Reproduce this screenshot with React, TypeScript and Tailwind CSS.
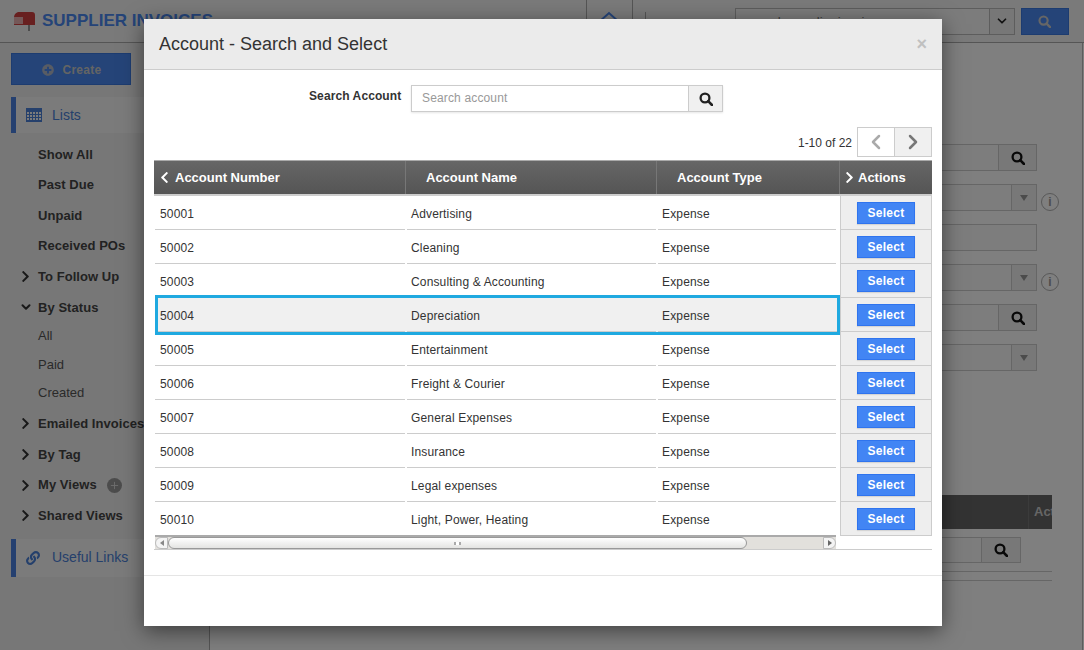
import { ChevronDown, ChevronLeft, ChevronRight, Plus } from 'lucide-react'
import { FaChevronLeft, FaChevronRight, FaLink, FaPlusCircle } from 'react-icons/fa'

const ACCOUNTS = [
  ['50001', 'Advertising'],
  ['50002', 'Cleaning'],
  ['50003', 'Consulting & Accounting'],
  ['50004', 'Depreciation'],
  ['50005', 'Entertainment'],
  ['50006', 'Freight & Courier'],
  ['50007', 'General Expenses'],
  ['50008', 'Insurance'],
  ['50009', 'Legal expenses'],
  ['50010', 'Light, Power, Heating'],
]

function SearchIcon({ className }: { className?: string }) {
  return (
    <svg className={className} viewBox="0 0 14 14" fill="none" stroke="currentColor">
      <circle cx="6" cy="6" r="4.4" strokeWidth="2.3" />
      <path d="M9.2 9.2 13 13" strokeWidth="2.6" strokeLinecap="round" />
    </svg>
  )
}

function NavItem({ label, arrow, down, extra }: { label: string; arrow?: boolean; down?: boolean; extra?: boolean }) {
  return (
    <div className="flex h-[30.6px] items-center pl-[21px] text-[13px] font-bold tracking-[0.05px] text-[#444]">
      <span className="flex w-[17px] shrink-0 items-center">
        {arrow && <FaChevronRight className="h-[13px] w-[9px] text-[#333]" />}
        {down && <ChevronDown className="h-[14px] w-[14px] -ml-[2px] text-[#333]" strokeWidth={3.5} />}
      </span>
      <span className="whitespace-nowrap">{label}</span>
      {extra && (
        <span className="ml-[10px] flex h-[15px] w-[15px] items-center justify-center rounded-full bg-[#999]">
          <Plus className="h-[11px] w-[11px] text-[#ddd]" strokeWidth={2} />
        </span>
      )}
    </div>
  )
}

function Sidebar() {
  return (
    <aside className="flex w-[210px] shrink-0 flex-col border-r border-[#aaa] bg-[#efefef] pt-[10px]">
      <button className="mx-[11px] flex h-[32px] w-[120px] items-center justify-center gap-[8px] border border-[#3a78e0] bg-[#4a88f0] pl-[2px] pt-[1px] text-[12px] font-bold tracking-[0.3px] text-[#c8c8c8]">
        <FaPlusCircle className="h-[12px] w-[12px] text-[#b0b8c8]" />
        Create
      </button>
      <div className="ml-[11px] mt-[12px] flex h-[36px] items-center border-l-[5px] border-[#4a80e0] bg-[#f7f7f7] pl-[10px] text-[14px] text-[#4a80d8]">
        <svg className="mr-[10px] h-[14px] w-[16px]" viewBox="0 0 16 14" fill="#4a80d8">
          <path d="M0 0h16v14H0z" />
          <path d="M1 4h2v2H1zM4 4h2v2H4zM7 4h2v2H7zM10 4h2v2h-2zM13 4h2v2h-2zM1 7h2v2H1zM4 7h2v2H4zM7 7h2v2H7zM10 7h2v2h-2zM13 7h2v2h-2zM1 10h2v2H1zM4 10h2v2H4zM7 10h2v2H7zM10 10h2v2h-2zM13 10h2v2h-2z" fill="#f7f7f7" />
        </svg>
        Lists
      </div>
      <div className="mt-[6px]">
        <NavItem label="Show All" />
        <NavItem label="Past Due" />
        <NavItem label="Unpaid" />
        <NavItem label="Received POs" />
        <NavItem label="To Follow Up" arrow />
        <NavItem label="By Status" down />
        <div className="-mt-[1px] mb-[1.5px]">
          <div className="flex h-[28.5px] items-center pl-[38px] text-[13px] text-[#555]">All</div>
          <div className="flex h-[28.5px] items-center pl-[38px] text-[13px] text-[#555]">Paid</div>
          <div className="flex h-[28.5px] items-center pl-[38px] text-[13px] text-[#555]">Created</div>
        </div>
        <NavItem label="Emailed Invoices" arrow />
        <NavItem label="By Tag" arrow />
        <NavItem label="My Views" arrow extra />
        <NavItem label="Shared Views" arrow />
      </div>
      <div className="ml-[11px] mt-[8px] flex h-[38px] items-center border-l-[5px] border-[#4a80e0] bg-[#f7f7f7] pl-[10px] text-[14px] text-[#4a80d8]">
        <FaLink className="mr-[12px] h-[14px] w-[14px]" />
        Useful Links
      </div>
    </aside>
  )
}

function Header() {
  return (
    <header className="flex h-[43px] items-center border-b border-[#aaa] bg-[#f5f5f5]">
      <svg className="ml-[13px] h-[20px] w-[23px]" viewBox="0 0 23 20">
        <path d="M5 1h14a3 3 0 0 1 3 3v10H1V7a6 6 0 0 1 4-6z" fill="#d04040" />
        <path d="M1 6h9v7H1z" fill="#e8b0b0" />
        <path d="M15 14h2v6h-2z" fill="#999" />
      </svg>
      <span className="ml-[6px] text-[17px] font-bold text-[#4a88f0]">SUPPLIER INVOICES</span>
      <div className="ml-[373px] flex h-full w-[47px] items-center justify-center border-x border-[#aaa]">
        <svg className="h-[20px] w-[22px]" viewBox="0 0 22 20" fill="none" stroke="#4a88f0" strokeWidth="2">
          <path d="M1 11 11 2l10 9M4 9v10h14V9" />
        </svg>
      </div>
      <div className="ml-[12px] flex h-[18px] w-[16px] items-end gap-[3px] border-l border-[#aaa] pl-[3px]">
        <span className="h-[10px] w-[3px] bg-[#aaa]" />
        <span className="h-[6px] w-[3px] bg-[#aaa]" />
      </div>
      <div className="ml-[74px] flex h-[27px] w-[280px] border border-[#bbb] bg-[#f8f8f8]">
        <span className="flex-1 pl-[10px] text-[13px] leading-[25px] text-[#777]">search supplier invoices</span>
        <span className="flex w-[25px] items-center justify-center border-l border-[#bbb] bg-[#eee]">
          <ChevronDown className="h-[14px] w-[14px] text-[#222]" strokeWidth={3} />
        </span>
      </div>
      <button className="ml-[6px] flex h-[27px] w-[48px] items-center justify-center border border-[#3a78e0] bg-[#4a88f0]">
        <SearchIcon className="h-[13px] w-[13px] text-[#ccc]" />
      </button>
    </header>
  )
}

function FormRow({ kind, info }: { kind: 'search' | 'select' | 'plain'; info?: boolean }) {
  return (
    <div className="flex">
      <div className="flex h-[27px] w-[337px] border border-[#ccc] bg-[#fafafa]">
        <span className="flex-1" />
        {kind === 'search' && (
          <span className="flex w-[38px] items-center justify-center border-l border-[#ccc] bg-[#f0f0f0]">
            <SearchIcon className="h-[14px] w-[14px] text-[#111]" />
          </span>
        )}
        {kind === 'select' && (
          <span className="flex w-[25px] items-center justify-center border-l border-[#ccc] bg-[#f0f0f0]">
            <span className="h-0 w-0 border-x-[4px] border-t-[6px] border-x-transparent border-t-[#999]" />
          </span>
        )}
      </div>
      {info && (
        <span className="ml-[4px] mt-[9px] flex h-[18px] w-[18px] items-center justify-center rounded-full border border-[#b0b0b0] text-[12px] font-bold text-[#999]">
          i
        </span>
      )}
    </div>
  )
}

function Content() {
  return (
    <main className="mr-px flex-1 border-r border-[#bbb] bg-white pl-[490px]">
      <div className="flex h-[371px] flex-col gap-[13px] pt-[101px]">
        <FormRow kind="search" />
        <FormRow kind="select" info />
        <FormRow kind="plain" />
        <FormRow kind="select" info />
        <FormRow kind="search" />
        <FormRow kind="select" />
      </div>
      <div className="-mt-[37px] pt-[118px]">
        <div className="flex h-[34px] w-[352px] justify-end bg-[#666]">
          <span className="w-[24px] overflow-hidden whitespace-nowrap border-l border-[#777] pl-[5px] text-[13px] font-bold leading-[34px] text-[#ccc]">Actions</span>
        </div>
      </div>
      <div className="mt-[8px] flex h-[26px] w-[321px] justify-end border border-[#ccc] bg-[#fafafa]">
        <span className="flex w-[39px] items-center justify-center border-l border-[#ccc] bg-[#f0f0f0]">
          <SearchIcon className="h-[14px] w-[14px] text-[#111]" />
        </span>
      </div>
      <div className="mt-[8px] h-[10px] w-[352px] border-y border-[#ccc]" />
    </main>
  )
}

function ScrollBar() {
  return (
    <div className="ml-px flex h-[14px] w-[681px] items-center border-t-2 border-[#aaa] bg-[#e2e0dc]">
      <span className="flex h-[12px] w-[13px] items-center justify-center rounded-l-full border border-[#bbb] bg-[#f4f4f4]">
        <span className="h-0 w-0 border-y-[3px] border-r-[4px] border-y-transparent border-r-[#888]" />
      </span>
      <span className="flex h-[12px] w-[579px] items-center justify-center rounded-full border border-[#999] bg-gradient-to-b from-white to-[#e4e4e2]">
        <span className="h-[3px] w-[7px] border-x-2 border-[#aaa] bg-[#fff]" />
      </span>
      <span className="flex-1" />
      <span className="flex h-[12px] w-[13px] items-center justify-center rounded-r-full border border-[#bbb] bg-[#f4f4f4]">
        <span className="h-0 w-0 border-y-[3px] border-l-[4px] border-y-transparent border-l-[#666]" />
      </span>
    </div>
  )
}

function AccountRow({ num, name, last }: { num: string; name: string; last: boolean }) {
  const active = num === '50004'
  const line = last ? '' : 'border-b border-[#ccc]'
  return (
    <div
      className={`flex h-[34px] gap-[2px] text-[12px] tracking-[0.15px] text-[#333] ${
        active ? 'ml-[4px] w-[679px] bg-[#f0f0f0] outline-[3px] outline-[#1fa9e0]' : 'ml-px w-[681px]'
      }`}
    >
      <span className={`flex items-center pt-[2px] ${line} ${active ? 'w-[247px] pl-[2px]' : 'w-[250px] pl-[5px]'}`}>{num}</span>
      <span className={`flex w-[249px] items-center pl-[4px] pt-[2px] ${line}`}>{name}</span>
      <span className={`flex flex-1 items-center pl-[4px] pt-[2px] ${line}`}>Expense</span>
    </div>
  )
}

function AccountModal() {
  return (
    <div className="absolute left-[144px] top-[19px] flex h-[607px] w-[798px] flex-col bg-white shadow-[0_5px_20px_rgba(0,0,0,0.5)]">
      <div className="flex h-[51px] shrink-0 items-center justify-between border-b border-[#ccc] bg-[#ebebeb] pl-[15px] pr-[15px]">
        <h3 className="text-[18px] text-[#333]">Account - Search and Select</h3>
        <span className="text-[18px] font-bold text-[#c0c0c0]">×</span>
      </div>

      <div className="mt-[15px] flex h-[27px] shrink-0">
        <label className="ml-[165px] mt-[2px] w-[92px] whitespace-nowrap text-[12px] font-bold leading-[18px] tracking-[0.1px] text-[#333]">Search Account</label>
        <div className="ml-[10px] flex h-[27px] w-[312px] border border-[#ccc] shadow-[0_1px_2px_rgba(0,0,0,0.1)]">
          <span className="flex-1 pl-[10px] text-[12px] leading-[25px] tracking-[0.15px] text-[#999]">Search account</span>
          <span className="flex w-[34px] items-center justify-center border-l border-[#ccc] bg-[#f0f0f0]">
            <SearchIcon className="h-[14px] w-[14px] text-[#222]" />
          </span>
        </div>
      </div>

      <div className="mt-[15px] flex h-[30px] shrink-0 items-center justify-end pr-[10px]">
        <span className="mr-[5px] pt-[2px] text-[12px] text-[#333]">1-10 of 22</span>
        <span className="flex h-[30px] w-[38px] items-center justify-center border border-[#ccc] bg-white">
          <ChevronLeft className="h-[24px] w-[24px] text-[#aaa]" strokeWidth={2.5} />
        </span>
        <span className="-ml-px flex h-[30px] w-[38px] items-center justify-center border border-[#ccc] bg-[#f0f0f0]">
          <ChevronRight className="h-[24px] w-[24px] text-[#777]" strokeWidth={2.5} />
        </span>
      </div>

      <div className="ml-[10px] mt-[3px] w-[778px] shrink-0">
        <div className="flex h-[36px] items-center border-t border-b-2 border-t-[#aaa] border-b-[#ccc] bg-gradient-to-b from-[#666] to-[#555] text-[13px] font-bold text-white">
          <div className="flex h-full w-[252px] items-center border-r border-[#777] pl-[6px]">
            <FaChevronLeft className="mr-[6px] h-[13px] w-[9px]" />
            Account Number
          </div>
          <div className="flex h-full w-[251px] items-center border-r border-[#777] pl-[20px]">Account Name</div>
          <div className="flex h-full w-[183px] items-center border-r border-[#777] pl-[20px]">Account Type</div>
          <div className="flex h-full flex-1 items-center pl-[5px]">
            <FaChevronRight className="mr-[4px] h-[13px] w-[9px]" />
            Actions
          </div>
        </div>

        <div className="flex">
          <div className="w-[685px] shrink-0">
            {ACCOUNTS.map(([num, name], i) => (
              <AccountRow key={num} num={num} name={name} last={i === ACCOUNTS.length - 1} />
            ))}
          </div>
          <div className="ml-px w-[92px] border border-t-0 border-[#ccc] bg-[#eee]">
            {ACCOUNTS.map(([num]) => (
              <div key={num} className="flex h-[34px] items-center justify-center border-b border-[#ccc] last:h-[33px] last:border-b-0">
                <button className="h-[22px] w-[58px] border border-[#2f74ee] bg-[#4285f4] text-[12px] font-bold tracking-[0.3px] text-white shadow-[0_1px_1px_rgba(0,0,0,0.1)]">
                  Select
                </button>
              </div>
            ))}
          </div>
        </div>
      </div>

      <div className="ml-[10px] -mt-[1px] w-[778px] shrink-0 border-b border-[#ccc]">
        <ScrollBar />
      </div>
      <div className="mt-[25px] h-px shrink-0 bg-[#e5e5e5]" />
    </div>
  )
}

export default function App() {
  return (
    <div className="relative h-[650px] w-[1084px] overflow-hidden bg-white font-['Liberation_Sans',Arial,sans-serif]">
      <div className="flex h-full flex-col">
        <Header />
        <div className="flex flex-1 overflow-hidden">
          <Sidebar />
          <Content />
        </div>
      </div>
      <div className="absolute inset-0 bg-black/50" />
      <AccountModal />
    </div>
  )
}
